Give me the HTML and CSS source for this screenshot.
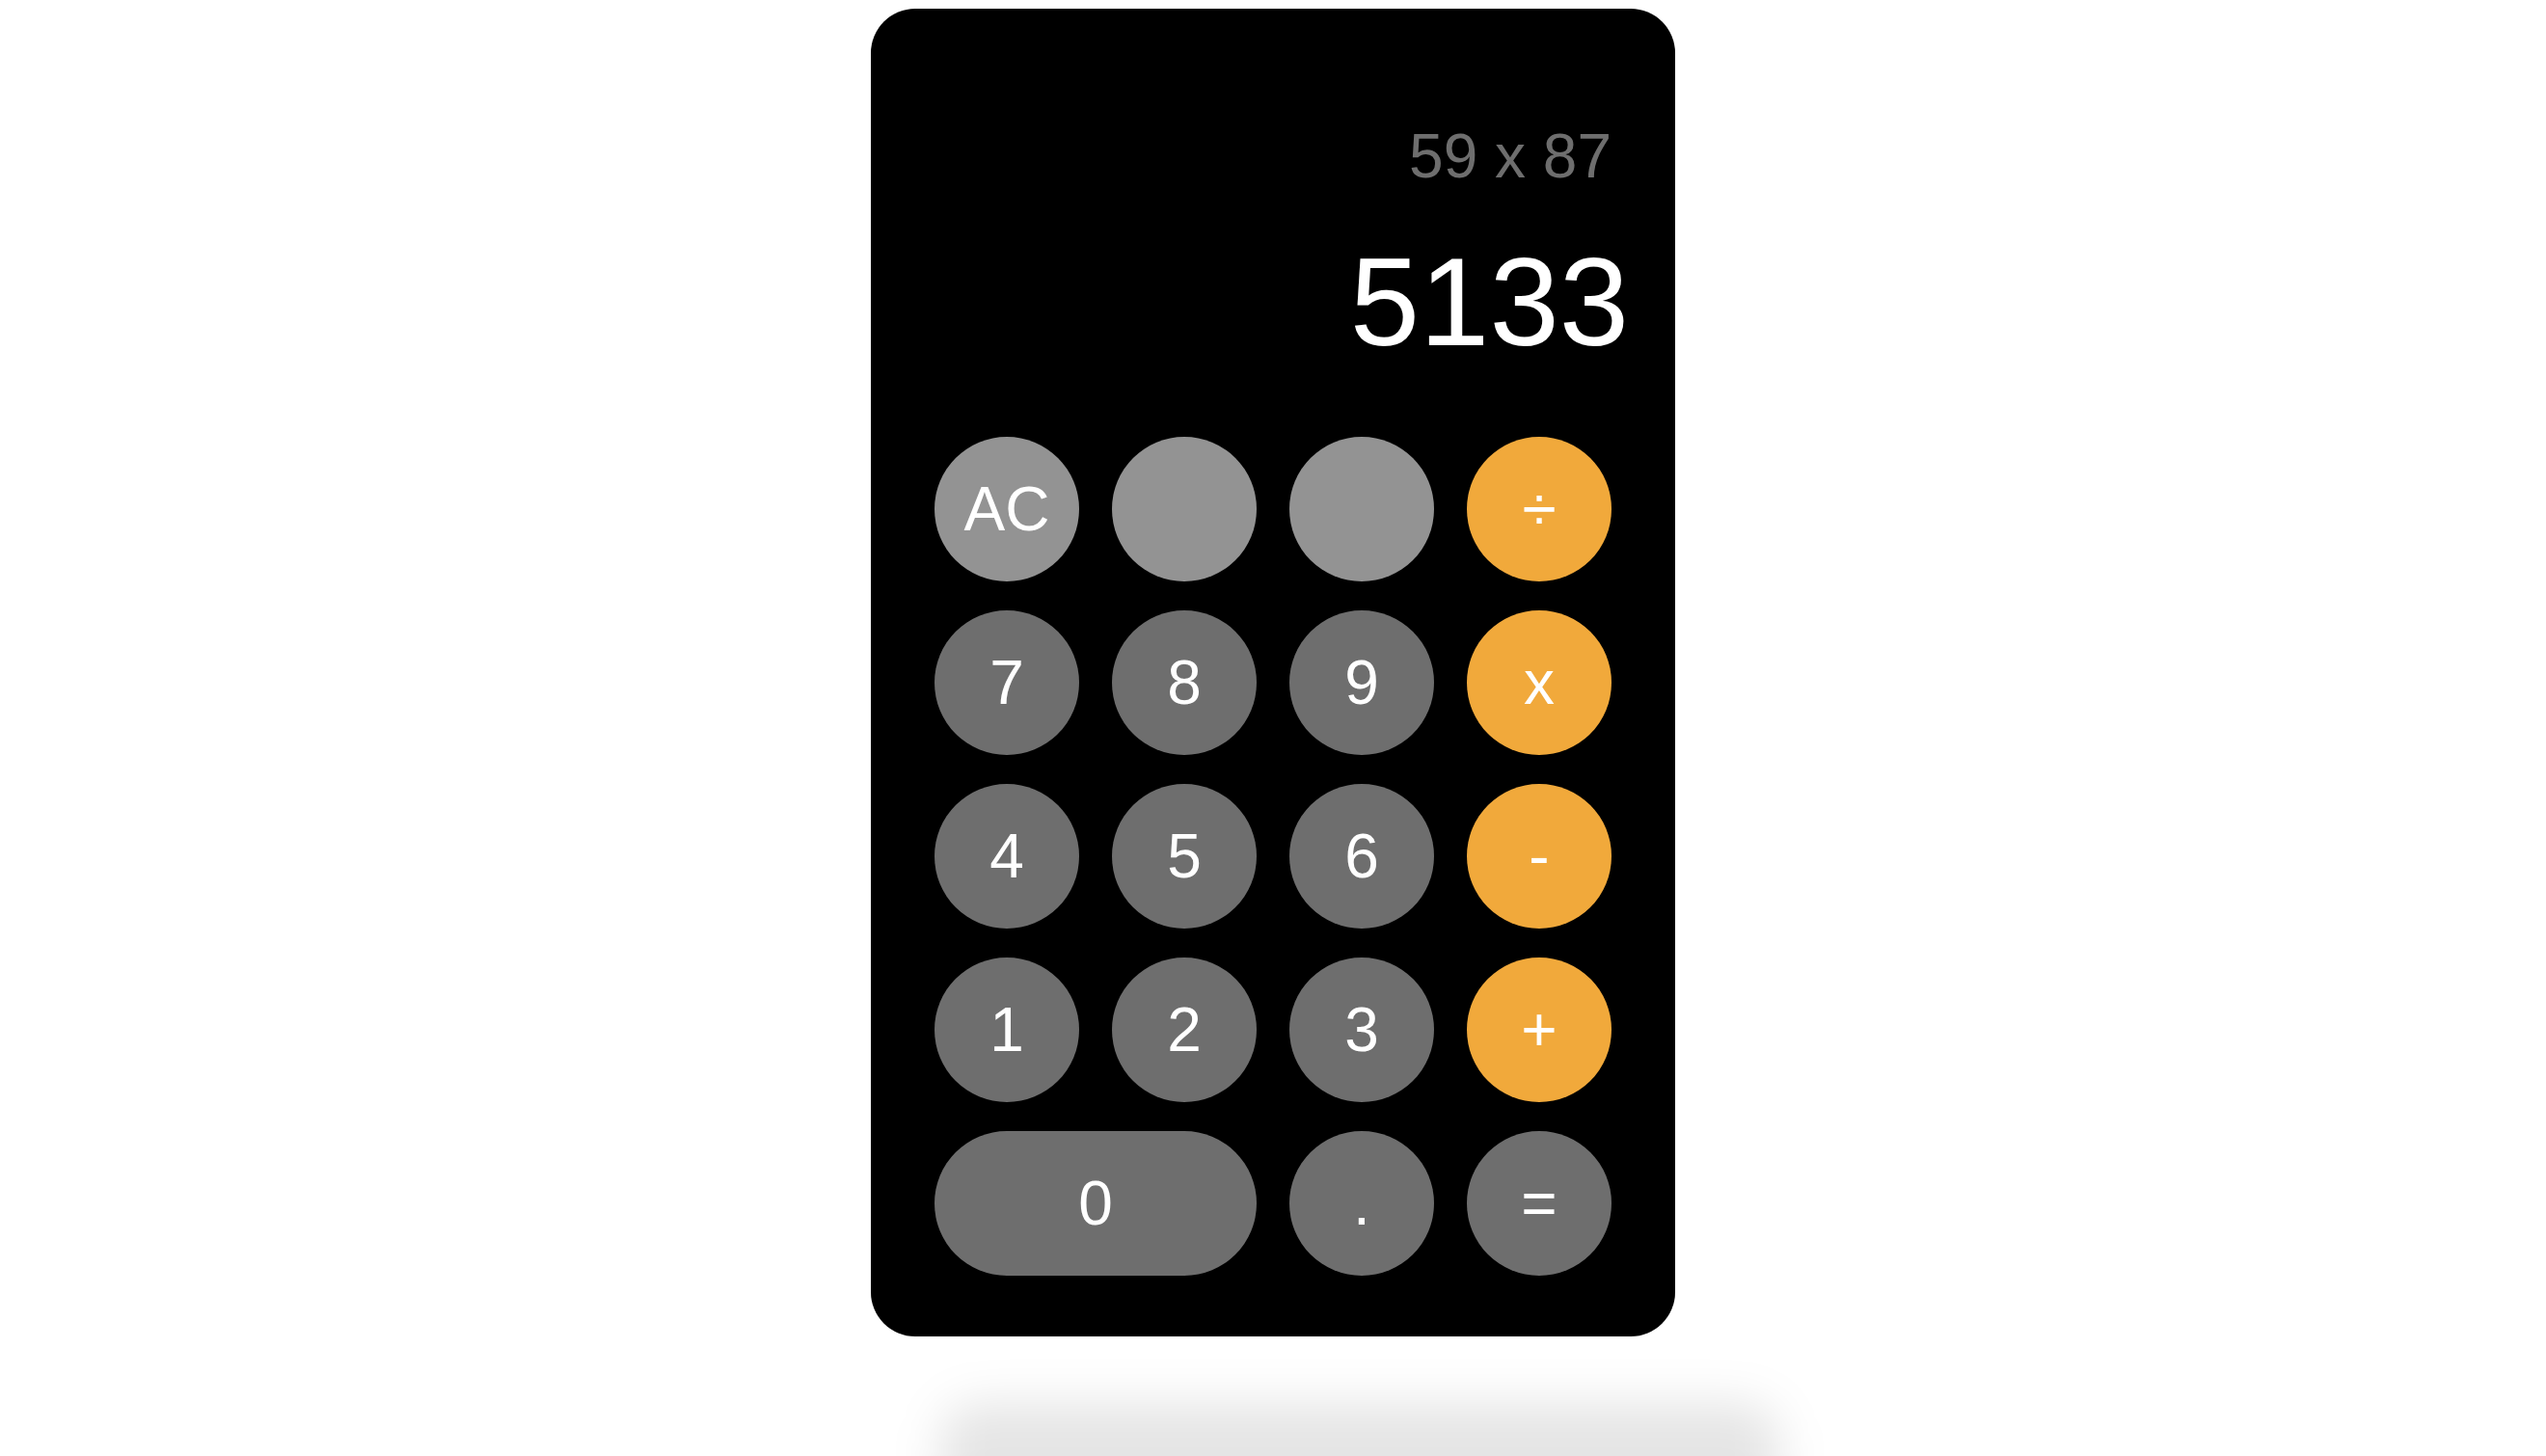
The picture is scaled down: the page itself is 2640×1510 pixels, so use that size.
FILE: index.html
```html
<!DOCTYPE html>
<html lang="en">
<head>
<meta charset="utf-8">
<title>Calculator</title>
<link rel="stylesheet" href="styles.css">
</head>
<body>
<main class="calc">
  <section class="display">
    <div class="prev">59 x 87</div>
    <div class="result">5133</div>
  </section>
  <section class="keys">
    <button class="key fn">AC</button>
    <button class="key fn"></button>
    <button class="key fn"></button>
    <button class="key op">÷</button>
    <button class="key">7</button>
    <button class="key">8</button>
    <button class="key">9</button>
    <button class="key op">x</button>
    <button class="key">4</button>
    <button class="key">5</button>
    <button class="key">6</button>
    <button class="key op">-</button>
    <button class="key">1</button>
    <button class="key">2</button>
    <button class="key">3</button>
    <button class="key op">+</button>
    <button class="key zero">0</button>
    <button class="key">.</button>
    <button class="key">=</button>
  </section>
</main>
</body>
</html>
```

FILE: styles.css
```css
html, body {
  margin: 0;
  padding: 0;
  overflow: hidden;
  background: #ffffff;
  height: 100%;
}

body {
  display: flex;
  justify-content: center;
  align-items: flex-start;
  padding-top: 9px;
  box-sizing: border-box;
  font-family: "Liberation Sans", Arial, sans-serif;
}

.calc {
  position: relative;
  width: 834px;
  height: 1377px;
  box-sizing: border-box;
  background: #000000;
  border-radius: 46px;
  padding: 116px 66px 63px;
  display: flex;
  flex-direction: column;
}

.calc::after {
  content: "";
  position: absolute;
  left: 72px;
  top: 1446px;
  width: 870px;
  height: 150px;
  background: rgba(0, 0, 0, 0.1);
  filter: blur(24px);
  border-radius: 40px;
  pointer-events: none;
}

.display {
  display: flex;
  flex-direction: column;
  align-items: flex-end;
  margin-bottom: 65px;
}

.prev {
  font-size: 64px;
  line-height: 74px;
  color: #6e6e6e;
  margin-bottom: 39px;
}

.result {
  font-size: 130px;
  line-height: 150px;
  color: #ffffff;
  margin-right: -18px;
}

.keys {
  display: grid;
  grid-template-columns: repeat(4, 150px);
  grid-auto-rows: 150px;
  column-gap: 34px;
  row-gap: 30px;
}

.key {
  border: none;
  margin: 0;
  padding: 0;
  border-radius: 75px;
  background: #6e6e6e;
  color: #ffffff;
  font-family: "Liberation Sans", Arial, sans-serif;
  font-size: 64px;
  display: flex;
  align-items: center;
  justify-content: center;
  cursor: pointer;
}

.key.fn {
  background: #939393;
}

.key.op {
  background: #f1a93b;
}

.key.zero {
  grid-column: span 2;
}
```
